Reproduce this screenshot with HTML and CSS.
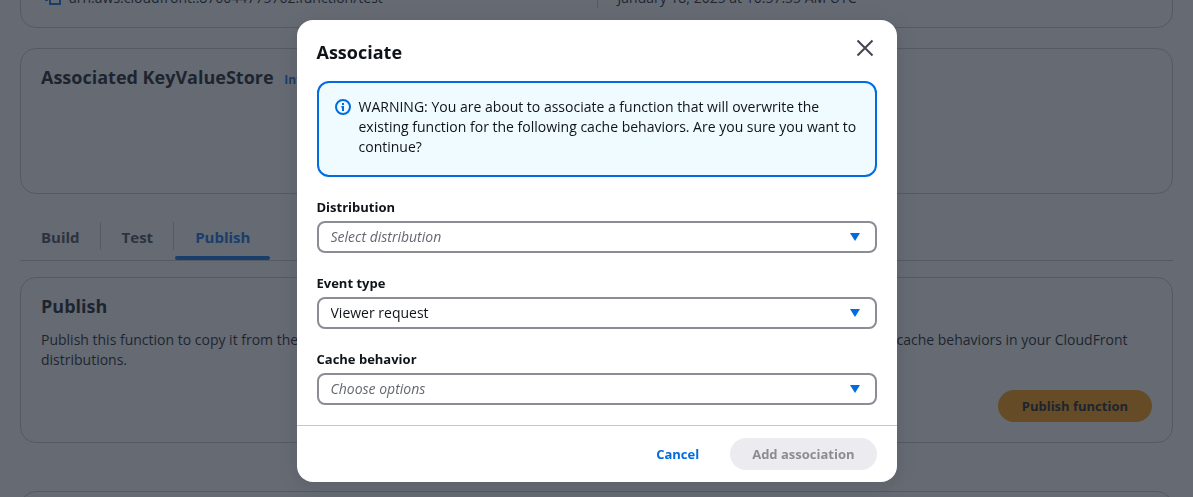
FILE: index.html
```html
<!DOCTYPE html>
<html lang="en">
<head>
<meta charset="utf-8">
<title>CloudFront function</title>
<link rel="stylesheet" href="styles.css">
</head>
<body>
<main class="page">
  <section class="card card-details">
    <div class="detail">
      <svg class="copy-icon" viewBox="0 0 16 16" aria-hidden="true"><path d="M5 5h10v9H5z"/><path d="M11 1H1v9h2"/></svg>
      <span>arn:aws:cloudfront::876044775762:function/test</span>
    </div>
    <div class="detail detail-split">January 18, 2025 at 10:57:55 AM UTC</div>
  </section>

  <section class="card card-store">
    <h2 class="card-title">Associated KeyValueStore <a class="info-link" href="#">Info</a></h2>
  </section>

  <nav class="tabs">
    <a class="tab" href="#">Build</a>
    <a class="tab" href="#">Test</a>
    <a class="tab tab-active" href="#">Publish</a>
  </nav>

  <section class="card card-publish">
    <h2 class="card-title">Publish</h2>
    <p class="card-text">Publish this function to copy it from the development stage to the live stage. Then you can associate this function with one or more cache behaviors in your CloudFront distributions.</p>
    <div class="card-actions"><button class="button button-primary" type="button">Publish function</button></div>
  </section>

  <section class="card card-next"></section>
</main>

<div class="overlay">
  <div class="modal" role="dialog" aria-modal="true" aria-labelledby="modal-title">
    <header class="modal-header">
      <h2 class="modal-title" id="modal-title">Associate</h2>
      <button class="close" type="button" aria-label="Close">
        <svg class="close-icon" viewBox="0 0 16 16" aria-hidden="true"><path d="M.5.5l15 15M15.500.5l-15 15"/></svg>
      </button>
    </header>
    <div class="modal-body">
      <div class="alert">
        <svg class="alert-icon" viewBox="0 0 16 16" aria-hidden="true"><circle cx="8" cy="8" r="7"/><path d="M6.500 8H8M8 7v5M8 4v2"/></svg>
        <p class="alert-text">WARNING: You are about to associate a function that will overwrite the existing function for the following cache behaviors. Are you sure you want to continue?</p>
      </div>
      <div class="field">
        <label class="label" for="distribution">Distribution</label>
        <div class="select-wrap">
          <select class="select placeholder" id="distribution"><option>Select distribution</option></select>
          <svg class="caret" viewBox="0 0 10 8" aria-hidden="true"><path d="M0 0h10L5 8z"/></svg>
        </div>
      </div>
      <div class="field">
        <label class="label" for="event">Event type</label>
        <div class="select-wrap">
          <select class="select" id="event"><option>Viewer request</option></select>
          <svg class="caret" viewBox="0 0 10 8" aria-hidden="true"><path d="M0 0h10L5 8z"/></svg>
        </div>
      </div>
      <div class="field">
        <label class="label" for="behavior">Cache behavior</label>
        <div class="select-wrap">
          <select class="select placeholder" id="behavior"><option>Choose options</option></select>
          <svg class="caret" viewBox="0 0 10 8" aria-hidden="true"><path d="M0 0h10L5 8z"/></svg>
        </div>
      </div>
    </div>
    <footer class="modal-footer">
      <button class="button button-link" type="button">Cancel</button>
      <button class="button button-disabled" type="button" disabled>Add association</button>
    </footer>
  </div>
</div>
</body>
</html>
```
FILE: styles.css
```css
* { box-sizing: border-box; }

body {
  margin: 0;
  height: 100vh;
  overflow: hidden;
  background: #fff;
  color: #0f141a;
  font: 14px/20px "Open Sans", "Noto Sans", sans-serif;
}

h2, p { margin: 0; }

.page {
  display: flex;
  flex-direction: column;
  height: 100%;
  overflow: hidden;
  padding: 0 20px;
}

.card {
  flex: none;
  padding: 16px 20px;
  border: 1px solid #c6c6cd;
  border-radius: 16px;
  background: #fff;
}

/* The page is scrolled so only the end of the details card shows. */
.card-details {
  display: grid;
  grid-template-columns: 1fr 1fr;
  margin-top: -29px;
  padding-bottom: 19px;
}
.detail {
  display: flex;
  align-items: center;
  gap: 8px;
  padding-left: 4px;
}
.detail-split {
  padding-left: 20px;
  border-left: 1px solid #c6c6cd;
}
.copy-icon {
  width: 16px;
  height: 16px;
  fill: none;
  stroke: #006ce0;
  stroke-width: 2;
}

.card-store {
  min-height: 146px;
  margin-top: 20px;
}
.card-title {
  font-size: 18px;
  line-height: 24px;
}
.info-link {
  margin-left: 6px;
  color: #006ce0;
  font-size: 12px;
  text-decoration: none;
}

.tabs {
  display: flex;
  flex: none;
  margin: 28px 0 16px;
  border-bottom: 1px solid #c6c6cd;
}
.tab {
  position: relative;
  padding: 5px 20px 3px;
  margin-bottom: 10px;
  border-left: 1px solid #c6c6cd;
  color: #424650;
  font-size: 15px;
  font-weight: 700;
  text-decoration: none;
}
.tab + .tab { padding-left: 21px; }
.tab:first-child { border-left-color: transparent; }
.tab-active { color: #006ce0; }
.tab-active::after {
  content: "";
  position: absolute;
  right: 0;
  bottom: -10px;
  left: 1px;
  height: 4px;
  border-radius: 2px;
  background: #006ce0;
}

.card-text { margin-top: 12px; }
.card-actions {
  display: flex;
  justify-content: flex-end;
  margin: 20px 0 4px;
}
.card-next {
  min-height: 80px;
  margin-top: 48px;
}

.button {
  height: 32px;
  padding: 0 22px;
  border: 0;
  border-radius: 16px;
  background: transparent;
  font: 700 13px/20px "Open Sans", "Noto Sans", sans-serif;
}
.button-primary {
  padding: 0 24px;
  background: #ff9900;
  color: #0f141a;
}
.button-link { color: #006ce0; }
.button-disabled { background: #ebebf0; color: #8c8c94; }

.overlay {
  position: fixed;
  inset: 0;
  display: flex;
  align-items: flex-start;
  justify-content: center;
  padding-top: 20px;
  background: rgba(35, 43, 55, 0.7);
}
.modal {
  width: 100%;
  max-width: 600px;
  border-radius: 16px;
  background: #fff;
  box-shadow: 0 4px 20px 1px rgba(0, 7, 22, 0.1);
}
.modal-header {
  display: flex;
  align-items: flex-start;
  justify-content: space-between;
  padding: 20px 20px 17px;
}
.modal-title {
  font-size: 18px;
  line-height: 24px;
}
.close {
  display: flex;
  padding: 0 4px;
  border: 0;
  background: none;
}
.close-icon {
  width: 16px;
  height: 16px;
  overflow: visible;
  fill: none;
  stroke: #424650;
  stroke-width: 2;
}
.modal-body {
  display: flex;
  flex-direction: column;
  gap: 20px;
  padding: 0 20px 20px;
}
.alert {
  display: flex;
  gap: 8px;
  padding: 14px 16px 18px;
  border: 2px solid #006ce0;
  border-radius: 12px;
  background: #f0fbff;
}
.alert-icon {
  flex: none;
  width: 16px;
  height: 16px;
  margin-top: 2px;
  fill: none;
  stroke: #006ce0;
  stroke-width: 2;
}
.field {
  display: flex;
  flex-direction: column;
  gap: 4px;
}
.label {
  font-size: 13px;
  font-weight: 700;
}
.select-wrap {
  display: grid;
  align-items: center;
}
.select {
  grid-area: 1 / 1;
  width: 100%;
  height: 32px;
  padding: 0 36px 0 12px;
  border: 2px solid #8c8c94;
  border-radius: 8px;
  appearance: none;
  background: #fff;
  color: #0f141a;
  font: inherit;
}
.placeholder { color: #656871; font-style: italic; }
.caret {
  grid-area: 1 / 1;
  z-index: 1;
  justify-self: end;
  width: 10px;
  height: 8px;
  margin-right: 17px;
  fill: #006ce0;
  pointer-events: none;
}
.modal-footer {
  display: flex;
  justify-content: flex-end;
  gap: 9px;
  padding: 12px 20px;
  border-top: 1px solid #c6c6cd;
}
```
